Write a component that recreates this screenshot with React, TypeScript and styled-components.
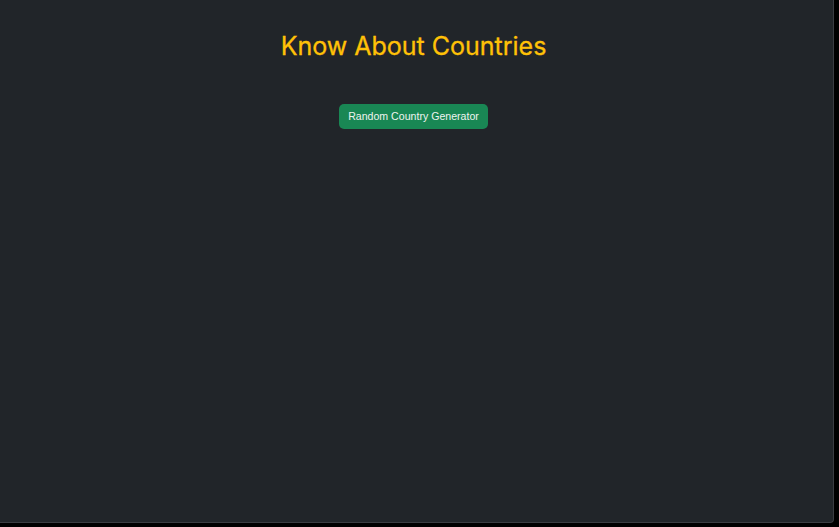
import React from 'react';
import styled, { createGlobalStyle } from 'styled-components';

const GlobalStyle = createGlobalStyle`
  html, body {
    margin: 0;
    padding: 0;
    background: #000;
  }
  #root {
    width: 839px;
    height: 527px;
  }
`;

const Screen = styled.div`
  box-sizing: border-box;
  width: 834px;
  height: 523px;
  padding-right: 6px;
  background: #212529;
  border-right: 1px solid #3a3d42;
  border-bottom: 1px solid #3a3d42;
  border-bottom-right-radius: 4px;
  display: flex;
  flex-direction: column;
  align-items: center;
  font-family: Inter, "Liberation Sans", sans-serif;
`;

const Title = styled.h2`
  margin: 31px 0 0;
  font-size: 25px;
  font-weight: 400;
  line-height: 30px;
  color: #ffc107;
  -webkit-text-stroke: 0.3px #ffc107;
`;

const GenerateButton = styled.button`
  margin-top: 43px;
  height: 25px;
  padding: 0 9px;
  border: none;
  border-radius: 5px;
  background: #198754;
  color: #eef3ef;
  font-family: "Liberation Sans", Arial, sans-serif;
  font-size: 10.6px;
  line-height: 25px;
  cursor: pointer;
`;

const App: React.FC = () => {
  return (
    <>
      <GlobalStyle />
      <Screen>
        <Title>Know About Countries</Title>
        <GenerateButton>Random Country Generator</GenerateButton>
      </Screen>
    </>
  );
};

export default App;
